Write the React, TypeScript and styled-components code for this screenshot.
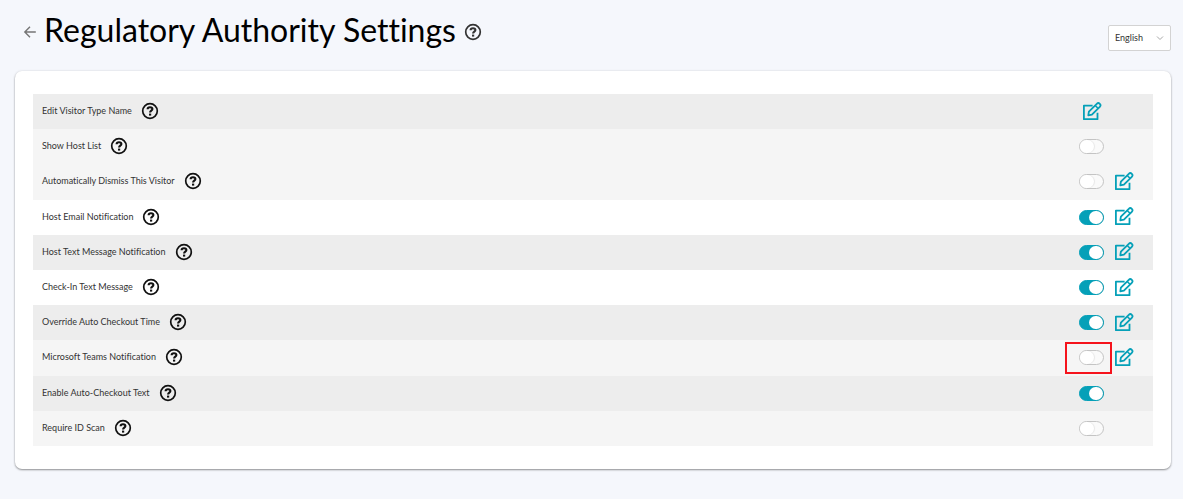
import React, { useState } from "react";
import styled, { createGlobalStyle } from "styled-components";

const GlobalStyle = createGlobalStyle`
  *, *::before, *::after { box-sizing: border-box; }
  body {
    margin: 0;
    background: #f5f7fc;
    color: #333;
    font-family: Lato, "Liberation Sans", sans-serif;
    font-variant-ligatures: none;
  }
`;

const Page = styled.main`
  min-height: 100vh;
  padding: 8px 12px 30px 15px;
`;

const Header = styled.header`
  display: flex;
  align-items: flex-start;
  justify-content: space-between;
  height: 63px;
`;

const Heading = styled.div`
  display: flex;
  align-items: center;
  height: 48px;
  padding-left: 8px;
`;

const IconButton = styled.button`
  display: flex;
  flex: none;
  padding: 0;
  border: 0;
  background: none;
  color: inherit;
  cursor: pointer;
`;

const BackLink = styled.a`
  display: flex;
  color: #757575;
`;

const Title = styled.h1`
  margin: 0 8px 0 7px;
  padding-bottom: 4px;
  color: #000;
  font-size: 32px;
  font-weight: 400;
  line-height: 44px;
  white-space: nowrap;
`;

const LanguageBox = styled.div`
  display: grid;
  align-items: center;
  margin-top: 17px;
  width: 63px;
  height: 26px;
  svg {
    grid-area: 1 / 1;
    justify-self: end;
    margin-right: 7px;
    pointer-events: none;
  }
`;

const LanguageSelect = styled.select`
  grid-area: 1 / 1;
  appearance: none;
  width: 100%;
  height: 100%;
  padding: 0 6px;
  border: 1px solid #d3d3d3;
  border-radius: 2px;
  background: #fff;
  color: #333;
  font: 400 9px/12px Lato, "Liberation Sans", sans-serif;
`;

const Card = styled.section`
  padding: 23px 18px;
  border-radius: 7px;
  background: #fff;
  box-shadow: 0 1px 2px rgba(0, 0, 0, 0.4), 0 0 3px rgba(0, 0, 0, 0.08);
`;

const SettingList = styled.ul`
  display: grid;
  grid-auto-rows: 1fr;
  min-height: 352px;
  margin: 0;
  padding: 0;
  list-style: none;
`;

type Tone = "dark" | "light" | "plain";
const tones: Record<Tone, string> = { dark: "#ededed", light: "#f5f5f5", plain: "#fff" };

const Row = styled.li<{ $tone: Tone }>`
  display: flex;
  align-items: center;
  justify-content: space-between;
  padding: 0 19px 0 9px;
  background: ${(p) => tones[p.$tone]};
`;

const LabelGroup = styled.div`
  display: flex;
  align-items: center;
  gap: 9px;
  padding-bottom: 1px;
  color: #111;
`;

const Label = styled.label`
  color: #333;
  font-size: 9px;
  line-height: 12px;
  white-space: nowrap;
`;

const Controls = styled.div`
  display: grid;
  grid-template-columns: 25px 20px;
  column-gap: 10px;
  align-items: center;
  justify-items: center;
  color: #05a0b8;
`;

const SwitchCell = styled.span<{ $marked?: boolean }>`
  position: relative;
  display: flex;
  &::after {
    content: "";
    display: ${(p) => (p.$marked ? "block" : "none")};
    position: absolute;
    inset: -8px -8px -9px -14px;
    border: 2px solid #f5131c;
    pointer-events: none;
  }
`;

const Switch = styled.input`
  appearance: none;
  display: flex;
  align-items: center;
  width: 25px;
  height: 15px;
  margin: 0;
  border: 1px solid #c4c4c4;
  border-radius: 8px;
  background: #fafafa;
  cursor: pointer;
  &::before {
    content: "";
    width: 14px;
    height: 13px;
    border-radius: 7px;
    background: #fff;
    box-shadow: 1px 0 1px rgba(0, 0, 0, 0.08);
  }
  &:checked {
    justify-content: flex-end;
    border-color: #05a0b8;
    background: #05a0b8;
  }
`;

const HelpIcon = () => (
  <svg width="18" height="18" viewBox="0 0 18 18" fill="none" stroke="currentColor" aria-hidden="true">
    <circle cx="9" cy="9" r="7.3" strokeWidth="1.7" />
    <path d="M6.6 7.3c0-1.3 1-2.1 2.4-2.1s2.4.8 2.4 1.9c0 1.6-2.3 1.6-2.3 3.5" strokeWidth="2.1" />
    <path d="M8 11.6h2.2v2H8z" fill="currentColor" stroke="none" />
  </svg>
);

const EditIcon = () => (
  <svg width="20" height="20" viewBox="0 0 20 20" fill="none" stroke="currentColor" strokeWidth="1.8" strokeLinejoin="round" aria-hidden="true">
    <path d="M10.6 3.6H1.9v13.6h13.6v-6.4" />
    <path d="M6.3 13.3l.6-3.6 7.9-7.9a2.1 2.1 0 0 1 3 3L9.9 12.700z" />
    <path d="M13.2 3.5l2.9 2.9" strokeWidth="1.5" />
  </svg>
);

interface Setting {
  name: string;
  tone: Tone;
  on?: boolean;
  editable?: boolean;
  marked?: boolean;
}

const settings: Setting[] = [
  { name: "Edit Visitor Type Name", tone: "dark", editable: true },
  { name: "Show Host List", tone: "light", on: false },
  { name: "Automatically Dismiss This Visitor", tone: "light", on: false, editable: true },
  { name: "Host Email Notification", tone: "plain", on: true, editable: true },
  { name: "Host Text Message Notification", tone: "dark", on: true, editable: true },
  { name: "Check-In Text Message", tone: "plain", on: true, editable: true },
  { name: "Override Auto Checkout Time", tone: "dark", on: true, editable: true },
  { name: "Microsoft Teams Notification", tone: "light", on: false, editable: true, marked: true },
  { name: "Enable Auto-Checkout Text", tone: "dark", on: true },
  { name: "Require ID Scan", tone: "light", on: false },
];

function SettingRow({ setting, id }: { setting: Setting; id: string }) {
  const [on, setOn] = useState(setting.on ?? false);
  return (
    <Row $tone={setting.tone}>
      <LabelGroup>
        <Label htmlFor={id}>{setting.name}</Label>
        <IconButton type="button" aria-label={`About ${setting.name}`}>
          <HelpIcon />
        </IconButton>
      </LabelGroup>
      <Controls>
        {setting.on !== undefined && (
          <SwitchCell $marked={setting.marked}>
            <Switch id={id} type="checkbox" role="switch" checked={on} onChange={(e) => setOn(e.target.checked)} />
          </SwitchCell>
        )}
        {setting.editable && (
          <IconButton id={setting.on === undefined ? id : undefined} type="button" aria-label={`Edit ${setting.name}`}>
            <EditIcon />
          </IconButton>
        )}
      </Controls>
    </Row>
  );
}

export default function App() {
  return (
    <>
      <GlobalStyle />
      <Page>
        <Header>
          <Heading>
            <BackLink href="#back" aria-label="Back">
              <svg width="14" height="14" viewBox="0 0 14 14" fill="none" stroke="currentColor" strokeWidth="1.4" aria-hidden="true">
                <path d="M12.8 7H2M7 1.7L1.8 7 7 12.3" />
              </svg>
            </BackLink>
            <Title>Regulatory Authority Settings</Title>
            <IconButton type="button" aria-label="About these settings">
              <HelpIcon />
            </IconButton>
          </Heading>
          <LanguageBox>
            <LanguageSelect aria-label="Language" defaultValue="English">
              <option>English</option>
            </LanguageSelect>
            <svg width="8" height="6" viewBox="0 0 8 6" fill="none" stroke="#a8a8a8" aria-hidden="true">
              <path d="M1 1.5l3 3 3-3" />
            </svg>
          </LanguageBox>
        </Header>
        <Card>
          <SettingList>
            {settings.map((setting, i) => (
              <SettingRow key={setting.name} id={`setting-${i}`} setting={setting} />
            ))}
          </SettingList>
        </Card>
      </Page>
    </>
  );
}
